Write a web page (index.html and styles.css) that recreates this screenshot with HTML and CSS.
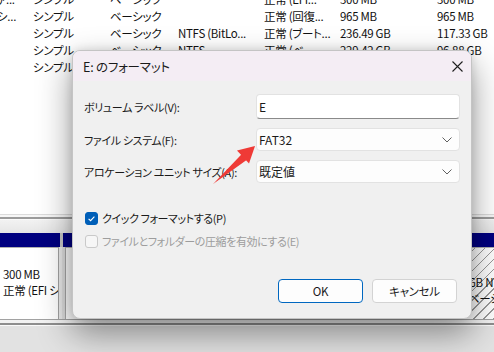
FILE: index.html
```html
<!DOCTYPE html>
<html lang="ja">
<head>
<meta charset="utf-8">
<title>E: のフォーマット</title>
<link rel="stylesheet" href="styles.css">
</head>
<body>
<div class="screen">
  <div class="table">
    <div class="row"><span class="c0">ァ...</span><span>シンプル</span><span>ベーシック</span><span></span><span>正常 (EFI...</span><span>300 MB</span><span>300 MB</span></div>
    <div class="row"><span class="c0">シ...</span><span>シンプル</span><span>ベーシック</span><span></span><span>正常 (回復...</span><span>965 MB</span><span>965 MB</span></div>
    <div class="row"><span class="c0"></span><span>シンプル</span><span>ベーシック</span><span>NTFS (BitLo...</span><span>正常 (ブート...</span><span>236.49 GB</span><span>117.33 GB</span></div>
    <div class="row"><span class="c0"></span><span>シンプル</span><span>ベーシック</span><span>NTFS</span><span>正常 (ベー...</span><span>229.42 GB</span><span>96.88 GB</span></div>
    <div class="row"><span class="c0"></span><span>シンプル</span><span>ベーシック</span><span>NTFS</span><span>正常 (ベー...</span><span>229.42 GB</span><span>GB</span></div>
  </div>
  <div class="blank"></div>
  <div class="sep">
    <div class="sep-light"></div>
    <div class="sep-dark"></div>
    <div class="sep-fill"></div>
  </div>
  <div class="diskbar">
    <div class="bar bar-1"></div>
    <div class="bar-gap"></div>
    <div class="bar bar-2"></div>
  </div>
  <div class="disks">
    <div class="disk disk-1">
      <div>300 MB</div>
      <div>正常 (EFI システム</div>
    </div>
    <div class="disk-gap"></div>
    <div class="disk disk-2"></div>
    <div class="disk disk-3">
      <div>GB NTFS</div>
      <div>ベーシック</div>
    </div>
  </div>
  <div class="status">
    <div class="st-line1"></div>
    <div class="st-gap"></div>
    <div class="st-line2"></div>
    <div class="st-fill"></div>
  </div>

  <div class="dialog">
    <div class="titlebar">
      <span class="title">E: のフォーマット</span>
      <svg class="close" width="11" height="11" viewBox="0 0 11 11"><path d="M0.5 0.5 L10.5 10.5 M10.5 0.5 L0.5 10.5" stroke="#1f1f1f" stroke-width="1.1" fill="none"/></svg>
    </div>
    <div class="body">
      <div class="form">
        <label class="lbl">ボリューム ラベル(V):</label>
        <div class="field input">E</div>
        <label class="lbl">ファイル システム(F):</label>
        <div class="field select"><span>FAT32</span><svg class="chev" width="10" height="6" viewBox="0 0 10 6"><path d="M0.5 0.5 L5 5 L9.5 0.5" stroke="#606060" stroke-width="1" fill="none"/></svg></div>
        <label class="lbl">アロケーション ユニット サイズ(A):</label>
        <div class="field select"><span>既定値</span><svg class="chev" width="10" height="6" viewBox="0 0 10 6"><path d="M0.5 0.5 L5 5 L9.5 0.5" stroke="#606060" stroke-width="1" fill="none"/></svg></div>
      </div>
      <div class="checks">
        <div class="check">
          <span class="box on"><svg width="13" height="13" viewBox="0 0 13 13"><path d="M3.6 6.8 L5.6 8.7 L9.4 4.6" stroke="#fff" stroke-width="1.1" fill="none"/></svg></span>
          <span>クイック フォーマットする(P)</span>
        </div>
        <div class="check disabled">
          <span class="box"></span>
          <span>ファイルとフォルダーの圧縮を有効にする(E)</span>
        </div>
      </div>
      <div class="buttons">
        <div class="btn primary">OK</div>
        <div class="btn">キャンセル</div>
      </div>
    </div>
  </div>

  <svg class="arrow" width="494" height="352" viewBox="0 0 494 352">
    <polygon points="212.4,184.6 246.6,160 241.6,154.2 213.6,183.4" fill="#ef3a36"/>
    <polygon points="255,146 249,163.5 237,150.5" fill="#ef3a36"/>
  </svg>
</div>
</body>
</html>
```

FILE: styles.css
```css
* { box-sizing: border-box; }
html, body { margin: 0; padding: 0; }
body {
  width: 494px;
  height: 352px;
  overflow: hidden;
  background: #ffffff;
  font-family: "Noto Sans CJK JP", "Noto Sans", sans-serif;
  font-feature-settings: "palt";
  color: #1a1a1a;
}
.screen {
  position: relative;
  width: 494px;
  height: 352px;
  overflow: hidden;
  display: flex;
  flex-direction: column;
}

/* background table */
.table {
  margin-top: -9px;
  font-size: 11.5px;
  letter-spacing: -0.3px;
  color: #111;
}
.row {
  display: grid;
  grid-template-columns: 33px 77px 68px 86px 76px 97px 1fr;
  height: 17px;
  line-height: 17px;
  white-space: nowrap;
}
.row span { overflow: hidden; }
.c0 { margin-left: -3px; }
.blank { height: 138px; flex: none; }

.sep { flex: none; }
.sep-light { height: 3px; border-top: 1px solid #dcdcdc; background: #f7f7f7; }
.sep-dark { height: 2px; background: #9c9c9c; }
.sep-fill { height: 14px; background: linear-gradient(#f2f2f2, #e6e6e6); border-top: 1px solid #fafafa; }

.diskbar { display: flex; height: 14px; flex: none; }
.bar { background: #000080; }
.bar-1 { width: 60px; }
.bar-gap { width: 3px; background: #c6c6c6; }
.bar-2 { flex: 1; }

.disks {
  display: flex;
  height: 72px;
  flex: none;
  background: #f0f0f0;
  font-size: 11.5px;
  letter-spacing: -0.3px;
  line-height: 16px;
  color: #111;
}
.disk { overflow: hidden; white-space: nowrap; }
.disk-1 {
  width: 59px;
  background: #fff;
  border-top: 1px solid #b0b0b0;
  border-right: 1px solid #a0a0a0;
  padding: 18px 0 0 3px;
}
.disk-gap {
  width: 7px;
  border-right: 1px solid #a8a8a8;
  border-left: 3px solid #e8e8e8;
  background: #dcdcdc;
}
.disk-2 { flex: 1; background: #fff; border-top: 1px solid #b0b0b0; }
.disk-3 {
  width: 28px;
  padding: 26px 0 0 2px;
  border-top: 1px solid #b0b0b0;
  background: repeating-linear-gradient(135deg, #ffffff 0 6px, #9a9a9a 6px 7px);
}

.status { flex: 1; display: flex; flex-direction: column; }
.st-line1 { height: 1px; background: #a2a2a2; }
.st-gap { height: 3px; background: #f2f2f2; }
.st-line2 { height: 2px; background: #8e8e8e; }
.st-fill { flex: 1; background: #e2e2e2; border-top: 1px solid #fafafa; }

/* dialog */
.dialog {
  position: absolute;
  left: 72px;
  top: 50px;
  width: 400px;
  height: 269px;
  border-radius: 8px;
  border: 1px solid #c4c4c4;
  background: #f0f0f0;
  overflow: hidden;
  box-shadow: 0 14px 34px rgba(0, 0, 0, 0.42), 0 0 10px rgba(0, 0, 0, 0.12);
  display: flex;
  flex-direction: column;
}
.titlebar {
  height: 30px;
  flex: none;
  background: #f4edf4;
  display: flex;
  align-items: center;
  justify-content: space-between;
  padding: 0 8px 0 10px;
}
.title { font-size: 12.5px; letter-spacing: -0.2px; color: #1a1a1a; }
.close { display: block; }

.body {
  flex: 1;
  padding: 13px 14px 0 11px;
  display: flex;
  flex-direction: column;
}
.form {
  display: grid;
  grid-template-columns: 172px 204px;
  grid-template-rows: 25px 23px 23px;
  row-gap: 9px;
  align-items: center;
  font-size: 11px;
  letter-spacing: -0.35px;
}
.lbl { color: #1a1a1a; white-space: nowrap; }
.field {
  height: 100%;
  background: #fdfdfd;
  border: 1px solid #e2e2e2;
  border-radius: 4px;
  padding-left: 2px;
  display: flex;
  align-items: center;
  color: #1a1a1a;
  font-size: 12px;
  letter-spacing: 0;
}
.input {
  background: #ffffff;
  border-bottom: 1px solid #8a8a8a;
  align-items: flex-start;
  padding-top: 3px;
}
.select { justify-content: space-between; padding-right: 7px; }
.chev { display: block; }

.checks {
  margin-top: 27px;
  display: flex;
  flex-direction: column;
  gap: 7px;
  font-size: 11px;
  letter-spacing: -0.4px;
}
.check { display: flex; align-items: center; gap: 4px; height: 16px; padding-left: 1px; }
.box {
  width: 13px;
  height: 13px;
  border-radius: 3px;
  border: 1px solid #c9c9c9;
  background: #f6f6f6;
  display: block;
  flex: none;
}
.box svg { display: block; margin: -1px; }
.box.on { background: #005fb8; border-color: #005fb8; }
.disabled { color: #9d9d9d; }

.buttons {
  margin-top: 30px;
  display: flex;
  justify-content: flex-end;
  gap: 9px;
}
.btn {
  width: 85px;
  height: 24px;
  border-radius: 4px;
  background: #fdfdfd;
  border: 1px solid #d3d3d3;
  display: flex;
  align-items: center;
  justify-content: center;
  font-size: 11.5px;
  letter-spacing: -0.3px;
  color: #1a1a1a;
}
.btn.primary { border-color: #0067c0; }

.arrow { position: absolute; left: 0; top: 0; pointer-events: none; }
```
